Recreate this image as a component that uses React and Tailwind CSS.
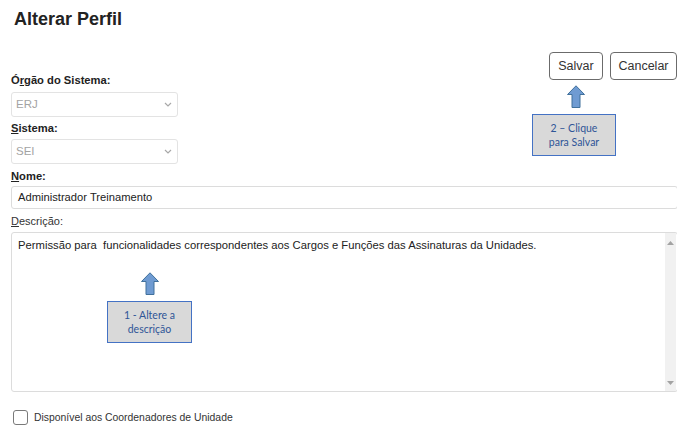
import React from 'react'

const Arrow = () => (
  <svg width="18" height="23" viewBox="0 0 18 23">
    <polygon
      points="0.5,9.5 9,0.8 17.5,9.5 13,9.5 13,22.5 5,22.5 5,9.5"
      fill="#6f9bd2"
      stroke="#41719c"
      strokeWidth="1"
    />
  </svg>
)

const Callout = ({ lines }) => (
  <div className="flex flex-col items-center justify-center h-full border border-[#4472c4] bg-[#d9d9d9] text-[#2f5597] text-[10.5px] leading-[14px] font-['Lato',sans-serif]">
    {lines.map(l => (
      <span key={l}>{l}</span>
    ))}
  </div>
)

const FakeSelect = ({ value }) => (
  <div className="flex items-center justify-between w-[167px] h-[25px] border border-[#e3e3e3] rounded-[3px] pl-[4px] pr-[5px] text-[11.5px] text-[#a3a3a3]">
    <span>{value}</span>
    <svg width="8" height="5" viewBox="0 0 8 5">
      <path d="M1 1l3 3 3-3" fill="none" stroke="#a8a8a8" strokeWidth="1.2" />
    </svg>
  </div>
)

export default function App() {
  return (
    <div className="relative w-full h-[434px] overflow-hidden bg-white text-[#333] font-['Liberation_Sans',Arial,sans-serif]">
      <h1 className="pl-[14px] pt-[8px] text-[18px] leading-[22px] font-bold text-[#222]">Alterar Perfil</h1>

      <div className="pl-[11px]">
        <div className="flex items-start justify-between mt-[22px]">
          <div className="flex flex-col pt-[21px]">
            <label className="text-[11.2px] leading-[14px] font-bold text-[#222]">
              Ó<span className="underline">r</span>gão do Sistema:
            </label>
            <div className="mt-[5px]">
              <FakeSelect value="ERJ" />
            </div>
            <label className="mt-[4px] text-[11.2px] leading-[14px] font-bold text-[#222]">
              <span className="underline">S</span>istema:
            </label>
            <div className="mt-[4px]">
              <FakeSelect value="SEI" />
            </div>
          </div>

          <div className="flex gap-[7px]">
            <button className="w-[54px] h-[28px] border border-[#6b6b6b] rounded-[4px] bg-white text-[12.5px] text-[#333]">
              Salvar
            </button>
            <button className="w-[67px] h-[28px] border border-[#6b6b6b] rounded-[4px] bg-white text-[12.5px] text-[#333]">
              Cancelar
            </button>
          </div>
        </div>

        <label className="block mt-[5px] text-[11.2px] leading-[14px] font-bold text-[#222]">
          <span className="underline">N</span>ome:
        </label>
        <div className="mt-[3px] w-[667px] h-[23px] flex items-center pl-[6px] border border-[#dcdcdc] rounded-[3px] text-[11.2px] text-[#222]">
          Administrador Treinamento
        </div>

        <label className="block mt-[5px] text-[11px] leading-[14px] text-[#333]">
          <span className="underline">D</span>escrição:
        </label>
        <div className="mt-[4px] w-[667px] h-[160px] flex border border-[#dcdcdc] rounded-[3px]">
          <div className="flex-1 pl-[6px] pt-[5px] text-[11.25px] leading-[14px] text-[#222] whitespace-pre">
            {'Permissão para  funcionalidades correspondentes aos Cargos e Funções das Assinaturas da Unidades.'}
          </div>
          <div className="w-[11px] mr-[1px] bg-[#f1f1f1] flex flex-col items-center justify-between pt-[8px] pb-[6px]">
            <svg width="7" height="4" viewBox="0 0 7 4">
              <polygon points="0,4 3.5,0 7,4" fill="#a3a3a3" />
            </svg>
            <svg width="7" height="4" viewBox="0 0 7 4">
              <polygon points="0,0 7,0 3.5,4" fill="#a3a3a3" />
            </svg>
          </div>
        </div>

        <div className="flex items-center mt-[18px] pl-[2px]">
          <div className="w-[15px] h-[15px] border border-[#7a7a7a] rounded-[3px] bg-white" />
          <span className="ml-[6px] text-[10.4px] text-[#333]">Disponível aos Coordenadores de Unidade</span>
        </div>
      </div>

      {/* annotation: salvar */}
      <div className="absolute left-[567px] top-[85px]">
        <Arrow />
      </div>
      <div className="absolute left-[532px] top-[114px] w-[84px] h-[42px]">
        <Callout lines={['2 – Clique', 'para Salvar']} />
      </div>

      {/* annotation: descricao */}
      <div className="absolute left-[141px] top-[272px]">
        <Arrow />
      </div>
      <div className="absolute left-[107px] top-[301px] w-[85px] h-[42px]">
        <Callout lines={['1 - Altere a', 'descrição']} />
      </div>
    </div>
  )
}
